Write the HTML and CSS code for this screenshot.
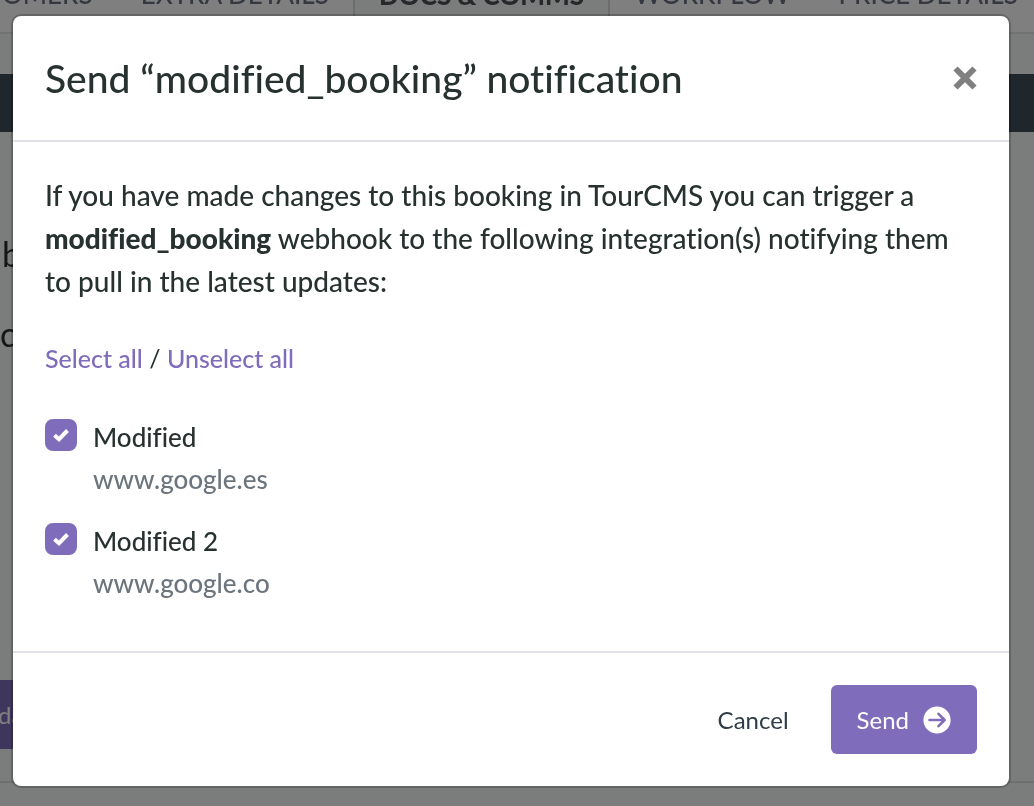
FILE: index.html
```html
<!DOCTYPE html>
<html lang="en">
<head>
<meta charset="utf-8">
<meta name="viewport" content="width=device-width, initial-scale=1">
<title>Send notification</title>
<link rel="stylesheet" href="styles.css">
</head>
<body>
<div class="page" inert>
  <nav class="tabs">
    <a class="tab" href="#customers">OMERS</a>
    <a class="tab" href="#extra">EXTRA DETAILS</a>
    <a class="tab tab-active" href="#docs">DOCS &amp; COMMS</a>
    <a class="tab" href="#workflow">WORKFLOW</a>
    <a class="tab" href="#price">PRICE DETAILS</a>
  </nav>
  <main class="panel">
    <div class="panel-bar"></div>
    <div class="panel-copy">
      <p class="panel-line panel-line-inset">b</p>
      <p class="panel-line">c</p>
    </div>
    <button class="panel-button" type="button">da</button>
  </main>
</div>

<div class="backdrop">
  <form class="modal" role="dialog" aria-modal="true" aria-labelledby="modal-title">
    <header class="modal-header">
      <h1 class="modal-title" id="modal-title">Send “modified_booking” notification</h1>
      <button class="close" type="button" aria-label="Close">
        <svg class="close-icon" viewBox="0 0 24 24" aria-hidden="true"><path d="M4.6 0.4 12 7.8 19.4 0.4 23.6 4.6 16.2 12 23.6 19.4 19.4 23.6 12 16.2 4.6 23.6 0.4 19.4 7.8 12 0.4 4.6Z"/></svg>
      </button>
    </header>
    <div class="modal-body">
      <p class="intro">If you have made changes to this booking in TourCMS you can trigger a <strong class="event">modified_booking</strong> webhook to the following integration(s) notifying them to pull in the latest updates:</p>
      <p class="select-links"><a class="link" href="#all">Select all</a> / <a class="link" href="#none">Unselect all</a></p>
      <div class="options">
        <div class="option">
          <span class="check">
            <input class="check-input" type="checkbox" id="modified-1" checked>
            <svg class="check-mark" viewBox="0 0 32 32" aria-hidden="true"><path d="M9.5 16.2 14 20.2 22.5 11.5"/></svg>
          </span>
          <label class="option-label" for="modified-1">Modified<span class="option-url">www.google.es</span></label>
        </div>
        <div class="option">
          <span class="check">
            <input class="check-input" type="checkbox" id="modified-2" checked>
            <svg class="check-mark" viewBox="0 0 32 32" aria-hidden="true"><path d="M9.5 16.2 14 20.2 22.5 11.5"/></svg>
          </span>
          <label class="option-label" for="modified-2">Modified 2<span class="option-url">www.google.co</span></label>
        </div>
      </div>
    </div>
    <footer class="modal-footer">
      <button class="button button-plain" type="button">Cancel</button>
      <button class="button button-primary" type="submit">Send
        <svg class="send-icon" viewBox="0 0 28 28" aria-hidden="true"><circle cx="14" cy="14" r="13.6"/><path d="M6.5 14H21M15.5 7.8 21.6 14 15.5 20.2"/></svg>
      </button>
    </footer>
  </form>
</div>
</body>
</html>
```
FILE: styles.css
```css
* {
  box-sizing: border-box;
}

body {
  margin: 0;
  min-height: 100vh;
  overflow: hidden;
  background: #f6fbf8;
  color: #27312f;
  font-family: Lato, "Open Sans", sans-serif;
  font-size: 26px;
  font-variant-ligatures: none;
}

button {
  font: inherit;
  border: 0;
  cursor: pointer;
}

p,
h1 {
  margin: 0;
}

a {
  text-decoration: none;
}

/* Page behind the dialog, scrolled part of the way down */
.page {
  position: fixed;
  inset: 0;
  overflow: hidden;
}

.tabs {
  display: flex;
  height: 78px;
  margin-top: -44px;
  background: #fff;
  border-bottom: 2px solid #e2e6e4;
}

.tab {
  display: flex;
  align-items: center;
  justify-content: center;
  padding: 0 24px;
  color: #6a7180;
  font-size: 26px;
  font-weight: 500;
  white-space: nowrap;
}

.tab:first-child {
  padding-left: 2px;
}

.tab-active {
  border: 2px solid #d8dcda;
  border-bottom: 0;
  background: #f6fbf8;
  color: #4d5356;
  font-weight: 900;
}

.panel {
  height: 749px;
  padding-top: 40px;
  border-bottom: 2px solid #dddfe0;
}

.panel-bar {
  height: 58px;
  background: #3e4e5b;
}

.panel-copy {
  display: grid;
  gap: 40px;
  height: 548px;
  padding-top: 102px;
  align-content: start;
}

.panel-line {
  font-size: 34px;
  line-height: 40px;
}

.panel-line-inset {
  padding-left: 2px;
}

.panel-button {
  height: 69px;
  margin-left: -2px;
  padding: 0 24px 0 0;
  background: #7f6cba;
  color: #fff;
  font-size: 24px;
}

/* Dialog */
.backdrop {
  position: fixed;
  inset: 0;
  padding: 14px 23px 18px 11px;
  background: rgba(0, 0, 0, 0.5);
}

.modal {
  display: flex;
  flex-direction: column;
  border: 2px solid rgba(0, 0, 0, 0.2);
  border-radius: 10px;
  background: #fff;
  background-clip: padding-box;
}

.modal-header {
  display: flex;
  align-items: center;
  justify-content: space-between;
  padding: 32px;
  border-bottom: 2px solid #e1e1e9;
}

.modal-title {
  font-size: 39px;
  font-weight: 500;
  line-height: 60px;
}

.close {
  display: flex;
  padding: 0;
  background: none;
}

.close-icon {
  width: 24px;
  height: 24px;
  fill: #808080;
}

.modal-body {
  padding: 32px 32px 47px;
}

.intro {
  font-size: 28px;
  font-weight: 500;
  line-height: 43px;
}

.event {
  font-weight: 900;
}

.select-links {
  margin-top: 35px;
  font-size: 25px;
  line-height: 40px;
}

.link {
  color: #7f6cba;
  font-weight: 500;
}

.options {
  display: grid;
  gap: 20px;
  margin-top: 38px;
}

.option {
  display: flex;
  gap: 16px;
}

.check {
  display: grid;
  width: 32px;
  height: 32px;
  margin-top: 3px;
}

.check-input,
.check-mark {
  grid-area: 1 / 1;
  width: 32px;
  height: 32px;
}

.check-input {
  margin: 0;
  appearance: none;
  border: 2px solid #7f6cba;
  border-radius: 8px;
}

.check-input:checked {
  background: #7f6cba;
}

.check-mark {
  fill: none;
  stroke: #fff;
  stroke-width: 4;
  pointer-events: none;
}

.option-label {
  font-weight: 500;
  line-height: 42px;
}

.option-url {
  display: block;
  color: #6c757d;
}

.modal-footer {
  display: flex;
  justify-content: flex-end;
  gap: 16px;
  padding: 32px;
  border-top: 2px solid #e1e1e9;
}

.button {
  display: flex;
  align-items: center;
  gap: 14px;
  height: 69px;
  padding: 0 26px;
  border-radius: 6px;
  font-size: 24px;
}

.button-plain {
  background: none;
  color: #303d49;
}

.button-primary {
  background: #7f6cba;
  color: #fff;
}

.send-icon {
  width: 28px;
  height: 28px;
  fill: #fff;
}

.send-icon path {
  fill: none;
  stroke: #7f6cba;
  stroke-width: 2.6;
  stroke-linecap: round;
  stroke-linejoin: round;
}
```
